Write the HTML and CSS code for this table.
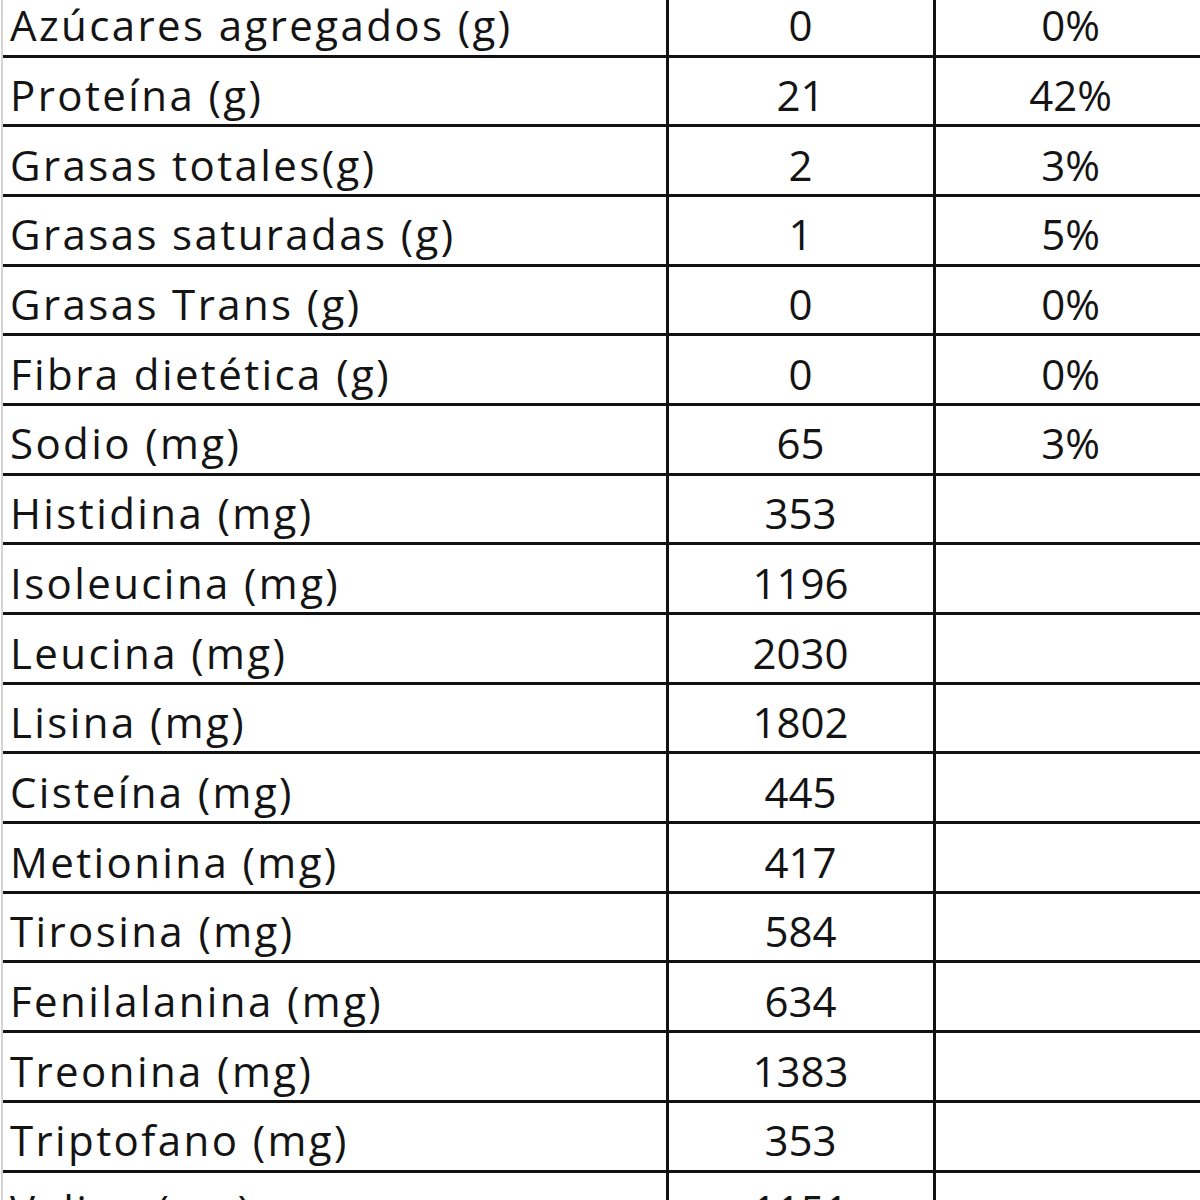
FILE: index.html
```html
<!DOCTYPE html>
<html lang="es">
<head>
<meta charset="utf-8">
<title>Tabla nutricional</title>
<link rel="stylesheet" href="styles.css">
</head>
<body>
<div class="sheet">
  <div class="row"><div class="c name">Azúcares agregados (g)</div><div class="c val">0</div><div class="c pct">0%</div></div>
  <div class="row"><div class="c name">Proteína (g)</div><div class="c val">21</div><div class="c pct">42%</div></div>
  <div class="row"><div class="c name">Grasas totales(g)</div><div class="c val">2</div><div class="c pct">3%</div></div>
  <div class="row"><div class="c name">Grasas saturadas (g)</div><div class="c val">1</div><div class="c pct">5%</div></div>
  <div class="row"><div class="c name">Grasas Trans (g)</div><div class="c val">0</div><div class="c pct">0%</div></div>
  <div class="row"><div class="c name">Fibra dietética (g)</div><div class="c val">0</div><div class="c pct">0%</div></div>
  <div class="row"><div class="c name">Sodio (mg)</div><div class="c val">65</div><div class="c pct">3%</div></div>
  <div class="row"><div class="c name">Histidina (mg)</div><div class="c val">353</div><div class="c pct"></div></div>
  <div class="row"><div class="c name">Isoleucina (mg)</div><div class="c val">1196</div><div class="c pct"></div></div>
  <div class="row"><div class="c name">Leucina (mg)</div><div class="c val">2030</div><div class="c pct"></div></div>
  <div class="row"><div class="c name">Lisina (mg)</div><div class="c val">1802</div><div class="c pct"></div></div>
  <div class="row"><div class="c name">Cisteína (mg)</div><div class="c val">445</div><div class="c pct"></div></div>
  <div class="row"><div class="c name">Metionina (mg)</div><div class="c val">417</div><div class="c pct"></div></div>
  <div class="row"><div class="c name">Tirosina (mg)</div><div class="c val">584</div><div class="c pct"></div></div>
  <div class="row"><div class="c name">Fenilalanina (mg)</div><div class="c val">634</div><div class="c pct"></div></div>
  <div class="row"><div class="c name">Treonina (mg)</div><div class="c val">1383</div><div class="c pct"></div></div>
  <div class="row"><div class="c name">Triptofano (mg)</div><div class="c val">353</div><div class="c pct"></div></div>
  <div class="row"><div class="c name">Valina (mg)</div><div class="c val">1151</div><div class="c pct"></div></div>
</div>
</body>
</html>
```
FILE: styles.css
```css
html, body {
  margin: 0;
  padding: 0;
  background: #ffffff;
  overflow: hidden;
}
body {
  width: 1200px;
  height: 1200px;
  font-family: "Open Sans", Lato, "Noto Sans", sans-serif;
  color: #141414;
}
.sheet {
  margin-top: -12.2px;
  margin-left: 1px;
  border-left: 2px solid #d4d4d4;
  display: flex;
  flex-direction: column;
}
.row {
  display: grid;
  grid-template-columns: 665.5px 267px 270px;
  height: 69.7px;
  flex: none;
  box-sizing: border-box;
  border-bottom: 3px solid #121212;
}
.c {
  font-size: 42px;
  line-height: 1;
  padding-top: 16.5px;
  white-space: nowrap;
  box-sizing: border-box;
  overflow: hidden;
}
.name {
  padding-left: 7px;
  letter-spacing: 2.4px;
  border-right: 3px solid #121212;
}
.val {
  text-align: center;
  border-right: 3px solid #121212;
}
.pct {
  text-align: center;
}
```
